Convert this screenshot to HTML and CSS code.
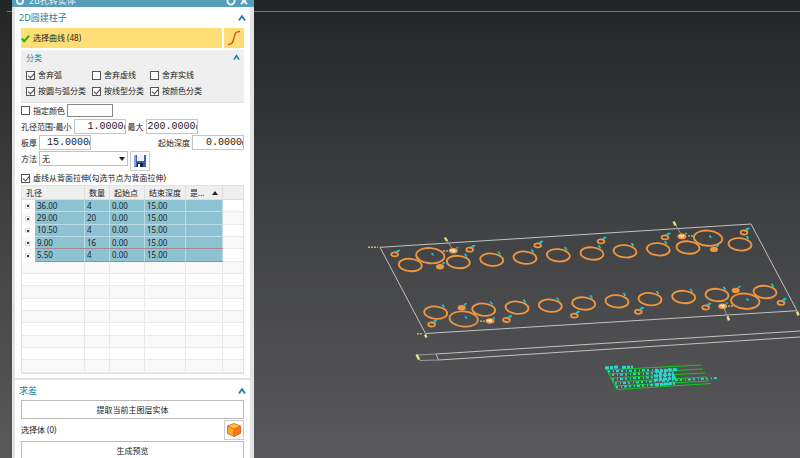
FILE: index.html
```html
<!DOCTYPE html>
<html lang="zh-CN">
<head>
  <meta charset="UTF-8" />
  <meta name="viewport" content="width=device-width, initial-scale=1.0" />
  <title>2d孔转实体</title>
  <link rel="stylesheet" href="styles.css">
</head>
<body>

<!-- Model view -->
<svg class="scene" viewBox="0 0 800 458" preserveAspectRatio="xMinYMin slice" aria-hidden="true">
  <defs>
    <g id="hole-m">
      <ellipse class="ring" rx="11.5" ry="6.2" transform="rotate(5)" />
      <path class="tag" d="M6 -7.5h2M7 -6h2" />
    </g>
    <g id="hole-l">
      <ellipse class="ring" rx="14.2" ry="7.6" transform="rotate(5)" />
      <path class="tag" d="M1 -2h2M2 -1h1.5" />
    </g>
    <g id="hole-s">
      <ellipse class="ring" rx="3.4" ry="2" transform="rotate(5)" />
      <path class="tag" d="M1.500 -3h3M2.500 -4h3" />
    </g>
    <g id="hole-f">
      <ellipse class="solid" rx="4" ry="2.7" />
      <path class="tag" d="M2 -3h2M3 -4h2" />
    </g>
    <g id="hole-w">
      <ellipse class="solid" rx="4.4" ry="2.8" />
      <path class="white" d="M-3 -0.5L2 -1M-1 1L2 0" />
      <path class="tag" d="M3 -3h2" />
    </g>
  </defs>

  <path class="horizon" d="M7 11.5H800" />

  <!-- plate outline -->
  <path class="edge" d="M380 247.3L751 224L797 310.7L425.5 333.5Z" />
  <path class="edge" d="M436 354L800 331M438.5 360L800 337M436 354L438.5 360" />
  <path class="edge dim" d="M418 355L436 354M420 360.5L438.5 360M418 355L420 360.5" />
  <path class="edge dim" d="M446 239L453 250M674 222L682 236M723 306L729 320" />

  <!-- upper row -->
  <use href="#hole-m" x="410.3" y="265" />
  <use href="#hole-m" x="458.3" y="262" />
  <use href="#hole-m" x="491.7" y="259.7" />
  <use href="#hole-m" x="525" y="257.7" />
  <use href="#hole-m" x="558.3" y="255.3" />
  <use href="#hole-m" x="592" y="253.5" />
  <use href="#hole-m" x="625" y="251.3" />
  <use href="#hole-m" x="658.3" y="249.3" />
  <use href="#hole-m" x="688" y="247.5" />
  <use href="#hole-m" x="740" y="244.3" />
  <use href="#hole-l" x="430.3" y="255.7" />
  <use href="#hole-l" x="708" y="238.2" />
  <use href="#hole-s" x="394.7" y="254.4" />
  <use href="#hole-s" x="469.7" y="249.7" />
  <use href="#hole-s" x="537.7" y="245.4" />
  <use href="#hole-s" x="601" y="241.4" />
  <use href="#hole-s" x="665" y="237.4" />
  <use href="#hole-s" x="744" y="232.5" />
  <use href="#hole-f" x="440" y="266.8" />
  <use href="#hole-f" x="714" y="249.4" />
  <use href="#hole-w" x="453.3" y="250.8" />
  <use href="#hole-w" x="682" y="236.4" />

  <!-- lower row -->
  <use href="#hole-m" x="435.7" y="312.7" />
  <use href="#hole-m" x="483.7" y="309.7" />
  <use href="#hole-m" x="517" y="307.7" />
  <use href="#hole-m" x="550.3" y="305.7" />
  <use href="#hole-m" x="583.7" y="303.5" />
  <use href="#hole-m" x="617" y="301.3" />
  <use href="#hole-m" x="650" y="299.2" />
  <use href="#hole-m" x="683.7" y="297" />
  <use href="#hole-m" x="717" y="295" />
  <use href="#hole-m" x="765" y="292" />
  <use href="#hole-l" x="463.7" y="319" />
  <use href="#hole-l" x="745.3" y="301.2" />
  <use href="#hole-s" x="431.7" y="324.5" />
  <use href="#hole-s" x="506.5" y="320" />
  <use href="#hole-s" x="574.3" y="315.6" />
  <use href="#hole-s" x="638.3" y="311.8" />
  <use href="#hole-s" x="705.7" y="307.5" />
  <use href="#hole-s" x="781" y="302.8" />
  <use href="#hole-f" x="461.7" y="307.8" />
  <use href="#hole-f" x="735.7" y="290.4" />
  <use href="#hole-w" x="490" y="321" />
  <use href="#hole-w" x="722.7" y="306.2" />

  <!-- dimension marks -->
  <path class="mark" d="M368 247.3h10M443 251h7M417 333.8h6M480 321.3h6M688 236h7M728 306h6" />
  <path class="mark tip" d="M445 237.5l2 3.5M673.5 221.5l2 4M425 334.5l1.5 3M416.5 354.5l2.5 5M727.5 316.5l1.5 4M797 311.5l1.5 4" />

  <!-- legend table -->
  <path class="rule" d="M606 370L701 365M608 374L703 369M610 378L705 373M612 382L707 377M614 386L709 381M617 389.5L711 383.5M606 368L617 389.5" />
  <path class="note bold" d="M605 368L619 367M622 367.5L633 367" />
  <path class="note" d="M608 371.5L678 369M612 375L673 372.5M612 379.5L675 376M615 383.5L718 378M616 387L674 384" />
  <path class="note bold" d="M655 371.5L678 369.5M654 376L674 374M654 380L677 378M655 385L675 383" />
</svg>

<main class="dialog">
  <header class="titlebar">
    <svg class="gear" viewBox="0 0 10 10"><circle cx="5" cy="5" r="3" /></svg>
    <h1>2d孔转实体</h1>
    <button class="bar-btn" aria-label="重置"><svg viewBox="0 0 10 10"><path d="M2.5 2.5A3.5 3.5 0 1 0 7.5 2.5" /></svg></button>
    <button class="bar-btn" aria-label="关闭"><svg viewBox="0 0 10 10"><path d="M2 2L8 8M8 2L2 8" /></svg></button>
  </header>

  <section class="panel">
    <div class="panel-head">
      <h2>2D圆建柱子</h2>
      <button class="fold" aria-label="折叠"><svg viewBox="0 0 8 8"><path d="M1 6.5L4 2L7 6.5" /></svg></button>
    </div>

    <div class="select-row">
      <button class="pick">
        <svg viewBox="0 0 10 10"><path d="M1 5L3.5 8L9 2" /></svg>
        选择曲线 (48)
      </button>
      <button class="curve" aria-label="曲线">
        <svg viewBox="0 0 20 20"><path d="M4 16.5C9 16.5 9 13 10 10C11 6 11 3.5 16 3.5" /></svg>
      </button>
    </div>

    <div class="group">
      <div class="group-head">
        <h3>分类</h3>
        <button class="fold small" aria-label="折叠"><svg viewBox="0 0 8 8"><path d="M1 6.5L4 2L7 6.5" /></svg></button>
      </div>
      <div class="checks">
        <label><input type="checkbox" checked>舍弃弧</label>
        <label><input type="checkbox">舍弃虚线</label>
        <label><input type="checkbox">舍弃实线</label>
        <label><input type="checkbox" checked>按圆与弧分类</label>
        <label><input type="checkbox" checked>按线型分类</label>
        <label><input type="checkbox" checked>按颜色分类</label>
      </div>
    </div>

    <div class="row color-row">
      <label><input type="checkbox">指定颜色</label>
      <button class="swatch" aria-label="颜色"></button>
    </div>

    <div class="row">
      <label for="dia-min">孔径范围-最小</label>
      <span class="num"><input id="dia-min" type="text" value="1.0000"><i></i></span>
      <label for="dia-max">最大</label>
      <span class="num"><input id="dia-max" type="text" value="200.0000"><i></i></span>
    </div>

    <div class="row">
      <label for="thick">板厚</label>
      <span class="num"><input id="thick" type="text" value="15.0000"><i></i></span>
      <label for="depth" class="push">起始深度</label>
      <span class="num"><input id="depth" type="text" value="0.0000"><i></i></span>
    </div>

    <div class="row method">
      <label for="method">方法</label>
      <span class="drop"><select id="method"><option>无</option></select></span>
      <button class="save" aria-label="保存">
        <svg viewBox="0 0 12 12">
          <path fill="#3d5ea8" d="M0 0H12V12H1L0 11Z" />
          <path fill="#8aa2d8" d="M0 0H2V11H0Z" />
          <path fill="#eef2fa" d="M3 0H10V6H3Z" />
          <path fill="#16204a" d="M3 8H9V12H3Z" />
          <path fill="#fff" d="M4 9H6V12H4Z" />
        </svg>
      </button>
    </div>

    <div class="row back">
      <label><input type="checkbox" checked>虚线从背面拉伸(勾选节点为背面拉伸)</label>
    </div>

    <table>
      <colgroup>
        <col class="c-tree"><col class="c-dia"><col class="c-count"><col class="c-start"><col class="c-end"><col class="c-flag"><col>
      </colgroup>
      <thead>
        <tr><th colspan="2">孔径</th><th>数量</th><th>起始点</th><th>结束深度</th><th><span class="sort">是...</span></th><th></th></tr>
      </thead>
      <tbody>
        <tr class="sel"><td><button class="plus" aria-label="展开"></button></td><td>36.00</td><td>4</td><td>0.00</td><td>15.00</td><td></td><td></td></tr>
        <tr class="sel"><td><button class="plus" aria-label="展开"></button></td><td>29.00</td><td>20</td><td>0.00</td><td>15.00</td><td></td><td></td></tr>
        <tr class="sel"><td><button class="plus" aria-label="展开"></button></td><td>10.50</td><td>4</td><td>0.00</td><td>15.00</td><td></td><td></td></tr>
        <tr class="sel"><td><button class="plus" aria-label="展开"></button></td><td>9.00</td><td>16</td><td>0.00</td><td>15.00</td><td></td><td></td></tr>
        <tr class="sel current"><td><button class="plus" aria-label="展开"></button></td><td>5.50</td><td>4</td><td>0.00</td><td>15.00</td><td></td><td></td></tr>
        <tr><td colspan="2"></td><td></td><td></td><td></td><td></td><td></td></tr>
        <tr><td colspan="2"></td><td></td><td></td><td></td><td></td><td></td></tr>
        <tr><td colspan="2"></td><td></td><td></td><td></td><td></td><td></td></tr>
        <tr><td colspan="2"></td><td></td><td></td><td></td><td></td><td></td></tr>
        <tr><td colspan="2"></td><td></td><td></td><td></td><td></td><td></td></tr>
        <tr><td colspan="2"></td><td></td><td></td><td></td><td></td><td></td></tr>
        <tr><td colspan="2"></td><td></td><td></td><td></td><td></td><td></td></tr>
        <tr><td colspan="2"></td><td></td><td></td><td></td><td></td><td></td></tr>
        <tr><td colspan="2"></td><td></td><td></td><td></td><td></td><td></td></tr>
      </tbody>
    </table>
  </section>

  <section class="panel">
    <div class="panel-head low">
      <h2>求差</h2>
      <button class="fold" aria-label="折叠"><svg viewBox="0 0 8 8"><path d="M1 6.5L4 2L7 6.5" /></svg></button>
    </div>
    <button class="wide">提取当前主图层实体</button>
    <div class="body-row">
      <span>选择体 (0)</span>
      <button class="cube" aria-label="选择体">
        <svg viewBox="0 0 14 14">
          <path fill="#ffc531" d="M7 0.5L13.5 3L7 6L0.5 3Z" />
          <path fill="#ffab1c" d="M0.5 3L7 6V13.5L0.5 10.5Z" />
          <path fill="#f47a16" d="M13.5 3L7 6V13.5L13.5 10.5Z" />
          <path fill="none" stroke="#e0561a" stroke-width="0.8" d="M7 0.5L13.5 3V10.5L7 13.5L0.5 10.5V3ZM0.5 3L7 6L13.5 3M7 6V13.5" />
        </svg>
      </button>
    </div>
    <button class="wide">生成预览</button>
  </section>
</main>

</body>
</html>
```
FILE: styles.css
```css
* {
  box-sizing: border-box;
}
body {
  margin: 0;
  height: 100vh;
  overflow: hidden;
  background: linear-gradient(#232426, #414244 50%, #59595b);
  color: #222;
  font: 8px/12px "Noto Sans", "Noto Sans CJK SC", sans-serif;
}
button, input, select {
  font: inherit;
  color: inherit;
  margin: 0;
  padding: 0;
  border-radius: 0;
}
button {
  display: flex;
  align-items: center;
  justify-content: center;
  background: none;
  border: none;
}
h1, h2, h3 {
  margin: 0;
  font-weight: normal;
}

/* model view */
.scene {
  position: absolute;
  top: 0;
  left: 0;
  width: 100%;
  height: 100%;
}
.scene path, .ring {
  fill: none;
}
.horizon { stroke: #77756f; }
.edge { stroke: #c2c2c2; }
.dim { stroke: #98a09e; }
.ring {
  stroke: #f0963f;
  stroke-width: 1.8;
}
.solid { fill: #f0963f; }
.tag {
  stroke: #10cccc;
  stroke-width: 1.4;
}
.white {
  stroke: #f4e6dc;
  stroke-width: 1.3;
}
.mark {
  stroke: #b9b96a;
  stroke-width: 1.4;
  stroke-dasharray: 2 1;
}
.mark.tip {
  stroke: #e2e285;
  stroke-width: 2.4;
  stroke-dasharray: none;
}
.rule { stroke: #14c81a; }
.note {
  stroke: #25d9d0;
  stroke-width: 2;
  stroke-dasharray: 2 3 1 2 3 2;
}
.note.bold {
  stroke-width: 3;
  stroke-dasharray: 4 1 3 1;
}

/* dialog window */
.dialog {
  position: relative;
  width: 242px;
  margin-left: 12px;
  border: solid #e3e3e3;
  border-width: 0 4px 0 3px;
  background: #e3e3e3;
}
.titlebar {
  display: flex;
  align-items: flex-end;
  height: 7px;
  margin: 0 -4px 0 -3px;
  padding: 0 5px 0 3px;
  overflow: hidden;
  background: #549fb8;
  color: #e4f1f5;
}
.titlebar h1 {
  flex: 1;
  padding-left: 4px;
  font-size: 9px;
  line-height: 12px;
}
.titlebar svg {
  display: block;
  width: 10px;
  height: 10px;
  margin-bottom: 1px;
  fill: none;
  stroke: #e4f1f5;
  stroke-width: 2;
}
.bar-btn {
  margin-left: 3px;
}
.panel {
  margin-bottom: 2px;
  padding: 1px 6px 4px;
  background: #fff;
}
.panel-head {
  display: flex;
  align-items: center;
  justify-content: space-between;
  height: 20px;
  margin: 0 -2px;
  color: #1f7f9f;
}
.panel-head h2 {
  font-size: 9px;
}
.panel-head.low {
  height: 19px;
}
.fold svg {
  width: 8px;
  height: 8px;
  fill: none;
  stroke: #1f7f9f;
  stroke-width: 1.8;
}
.fold.small svg {
  width: 7px;
  height: 7px;
}

.select-row {
  display: flex;
  gap: 2px;
}
.pick, .curve {
  height: 20px;
  background: #ffdf75;
}
.pick {
  flex: 1;
  justify-content: flex-start;
  gap: 3px;
}
.pick svg {
  width: 9px;
  height: 9px;
  fill: none;
  stroke: #27b827;
  stroke-width: 2.5;
}
.curve {
  width: 20px;
}
.curve svg {
  width: 20px;
  height: 20px;
  fill: none;
  stroke: #dc4a22;
  stroke-width: 1.4;
}

.group {
  height: 53px;
  margin-top: 2px;
  padding: 0 4px 0 5px;
  background: #efefef;
  border: solid #e3e3e3;
  border-width: 0 0 1px;
}
.group-head {
  display: flex;
  align-items: center;
  justify-content: space-between;
  height: 15px;
  color: #1f7f9f;
}
.group-head h3 {
  font-size: 8px;
}
.checks {
  display: grid;
  grid-template-columns: 66px 58px 1fr;
  grid-auto-rows: 16px;
  padding-top: 2px;
}
label {
  display: flex;
  align-items: center;
  gap: 3px;
  white-space: nowrap;
}
input[type="checkbox"] {
  display: grid;
  place-items: center;
  appearance: none;
  width: 9px;
  height: 9px;
  border: 1px solid #555;
  background: #fff;
}
input[type="checkbox"]:checked::after {
  content: "";
  width: 3px;
  height: 5px;
  margin-bottom: 2px;
  border: solid #444;
  border-width: 0 1px 1px 0;
  transform: rotate(40deg);
}

.row {
  display: flex;
  align-items: center;
  gap: 2px;
  height: 15px;
  margin-bottom: 1px;
}
.color-row {
  gap: 2px;
}
.swatch {
  width: 46px;
  height: 13px;
  border: 1px solid #888;
  background: #fff;
}
.num {
  display: flex;
  align-items: center;
  width: 52px;
  height: 15px;
  border: 1px solid #c4c4c4;
  background: #fff;
}
.num input {
  width: 49px;
  height: 13px;
  border: none;
  outline: none;
  background: none;
  font-family: "Liberation Mono", monospace;
  font-size: 10px;
  text-align: right;
}
.num i {
  width: 1px;
  height: 4px;
  background: #777;
}
.push {
  margin-left: auto;
}
.method {
  align-items: flex-start;
  height: 20px;
  margin-bottom: 0;
}
.method label {
  height: 15px;
}
.drop {
  position: relative;
  width: 89px;
}
.drop::after {
  content: "";
  position: absolute;
  top: 6px;
  right: 3px;
  border: solid transparent;
  border-width: 4px 3px 0;
  border-top-color: #222;
}
.drop select {
  display: block;
  appearance: none;
  width: 100%;
  height: 15px;
  padding-left: 2px;
  border: 1px solid #c0c0c0;
  background: #fff;
}
.save, .cube {
  width: 20px;
  height: 20px;
  border: 1px solid #ccc;
  background: #fff;
}
.save svg {
  width: 12px;
  height: 12px;
}
.back {
  height: 14px;
  margin-bottom: 0;
}

table {
  width: 100%;
  margin: 0;
  border-collapse: separate;
  border-spacing: 0;
  table-layout: fixed;
  border: 1px solid #e2e2e2;
  line-height: 10px;
  height: 189px;
}
.c-tree { width: 13px; }
.c-dia { width: 50px; }
.c-count { width: 25px; }
.c-start { width: 35px; }
.c-end { width: 41px; }
.c-flag { width: 37px; }
th, td {
  padding: 0 0 0 3px;
  border: solid #e9e9e9;
  border-width: 0 1px 1px 0;
  text-align: left;
  font-weight: normal;
  white-space: nowrap;
}
th {
  height: 14px;
  padding-left: 4px;
  background: #efefef;
  border-color: #dedede;
}
td {
  height: 12px;
}
th:last-child, td:last-child {
  border-right: none;
}
tbody tr:nth-child(even) {
  background: #f9f9f9;
}
.sel td:nth-child(n+2):nth-child(-n+6) {
  background: #8cc2d2;
  border-color: #bddbe4;
  padding-left: 2px;
}
.sel td:first-child {
  border: none;
}
.current td:nth-child(n+2):nth-child(-n+6) {
  box-shadow: 0 -1px #a08a90;
  border-bottom-color: #a08a90;
}
.sort {
  display: flex;
  align-items: center;
  justify-content: space-between;
  padding-right: 4px;
}
.sort::after {
  content: "";
  border: solid transparent;
  border-width: 0 3px 4px;
  border-bottom-color: #222;
}
.plus {
  width: 5px;
  height: 5px;
  border: 1px solid #ddd;
}
.plus::after {
  content: "";
  flex: none;
  width: 2px;
  height: 2px;
  background: #444;
}

.wide {
  width: 100%;
  height: 19px;
  border: 1px solid #bbb;
  background: #fff;
}
.body-row {
  display: flex;
  align-items: center;
  justify-content: space-between;
  height: 22px;
}
.cube svg {
  width: 14px;
  height: 14px;
}
```
